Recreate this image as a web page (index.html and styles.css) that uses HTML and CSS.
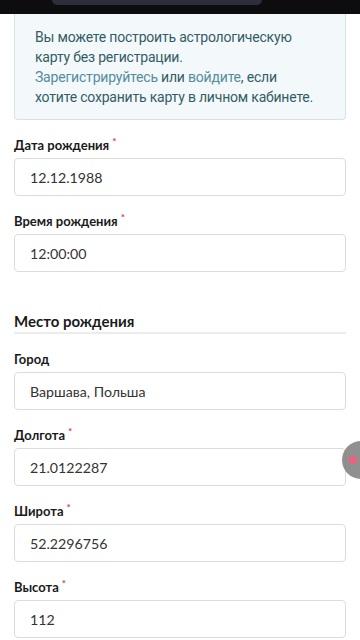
FILE: index.html
```html
<!DOCTYPE html>
<html lang="ru">

<head>
    <meta charset="UTF-8" />
    <meta name="viewport" content="width=device-width, initial-scale=1.0" />
    <title>Натальная карта</title>
    <link rel="stylesheet" href="styles.css">
</head>

<body>
    <div class="statusBar">
        <div class="notch"></div>
    </div>

    <div class="page">
        <div class="notice">
            <span>Вы можете построить астрологическую</span><br>
            <span>карту без регистрации.</span><br>
            <a href="#" class="link">Зарегистрируйтесь</a> <span>или</span> <a href="#" class="link">войдите</a><span>, если</span><br>
            <span>хотите сохранить карту в личном кабинете.</span>
        </div>

        <form id="chartForm">
            <div class="field">
                <label for="dob" class="label">Дата рождения<span class="req">*</span></label>
                <input type="text" id="dob" class="input" value="12.12.1988" />
            </div>

            <div class="field">
                <label for="tob" class="label">Время рождения<span class="req">*</span></label>
                <input type="text" id="tob" class="input" value="12:00:00" />
            </div>

            <h2 class="sectionHead">Место рождения</h2>

            <div class="field">
                <label for="city" class="label">Город</label>
                <input type="text" id="city" class="input" value="Варшава, Польша" />
            </div>

            <div class="field">
                <label for="lon" class="label">Долгота<span class="req">*</span></label>
                <input type="text" id="lon" class="input" value="21.0122287" />
            </div>

            <div class="field">
                <label for="lat" class="label">Широта<span class="req">*</span></label>
                <input type="text" id="lat" class="input" value="52.2296756" />
            </div>

            <div class="field">
                <label for="alt" class="label">Высота<span class="req">*</span></label>
                <input type="text" id="alt" class="input" value="112" />
            </div>
        </form>
    </div>

    <div class="floatBtn"><span class="dot"></span></div>
</body>

</html>
```

FILE: styles.css
```css
body {
    margin: 0;
    background-color: #fff;
    font-family: Lato, Roboto, "Noto Sans", sans-serif;
    color: #222;
}

.statusBar {
    height: 14px;
    background-color: #0d0d0f;
    position: relative;
}

.notch {
    position: absolute;
    left: 52px;
    width: 210px;
    top: 0;
    height: 5px;
    background-color: #2c2e3a;
    border-radius: 0 0 14px 14px;
}

.page {
    padding: 0 14px;
}

.notice {
    background-color: #f3f9fb;
    border: 1px solid #d3e3e8;
    border-top: 0;
    border-radius: 0 0 4px 4px;
    padding: 13px 8px 12px 20px;
    font-family: Roboto, "Noto Sans", sans-serif;
    font-size: 14px;
    letter-spacing: -0.2px;
    line-height: 20px;
    color: #345c66;
    white-space: nowrap;
}

.link {
    color: #548c9e;
    text-decoration: none;
}

.field {
    margin-top: 16px;
}

.label {
    display: block;
    font-size: 13px;
    font-weight: 700;
    line-height: 18px;
    margin-bottom: 4px;
    color: #1a1a1a;
}

.req {
    color: #c4475c;
    font-size: 10px;
    vertical-align: top;
    margin-left: 3px;
    position: relative;
    top: -4px;
}

.input {
    display: block;
    box-sizing: border-box;
    width: 100%;
    height: 38px;
    border: 1px solid #dcdcdc;
    border-radius: 4px;
    padding: 0 15px;
    font-family: Lato, Roboto, sans-serif;
    font-size: 14.2px;
    color: #333;
    background-color: #fff;
}

.sectionHead {
    margin: 39px 0 0;
    font-size: 15px;
    font-weight: 700;
    line-height: 20px;
    padding-bottom: 1px;
    border-bottom: 2px solid #ececec;
    color: #1a1a1a;
}

.floatBtn {
    position: fixed;
    right: -20px;
    top: 441px;
    width: 38px;
    height: 38px;
    border-radius: 50%;
    background-color: rgba(125, 125, 125, 0.85);
}

.dot {
    position: absolute;
    left: 7px;
    top: 15px;
    width: 8px;
    height: 8px;
    border-radius: 50%;
    background-color: #f0607e;
}
```
